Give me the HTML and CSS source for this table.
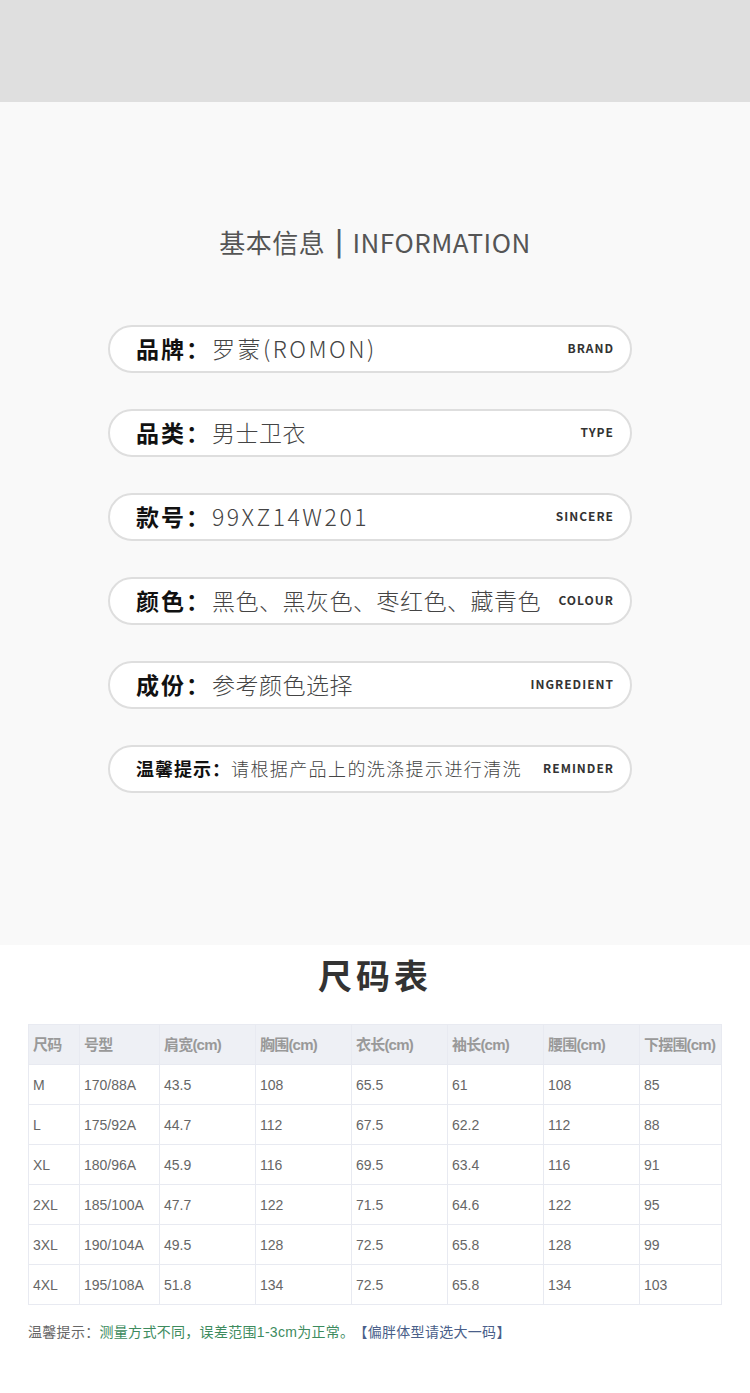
FILE: index.html
```html
<!DOCTYPE html>
<html lang="zh-CN">
<head>
    <meta charset="UTF-8">
    <meta name="viewport" content="width=device-width, initial-scale=1.0">
    <title>基本信息</title>
    <link rel="stylesheet" href="styles.css">
</head>
<body>
    <div class="top-band"></div>

    <section class="info">
        <h2 class="info-title">基本信息<span class="bar">|</span>INFORMATION</h2>

        <div class="pill">
            <span class="label">品牌：</span>
            <span class="value latin">罗蒙(ROMON)</span>
            <span class="en">BRAND</span>
        </div>
        <div class="pill">
            <span class="label">品类：</span>
            <span class="value">男士卫衣</span>
            <span class="en">TYPE</span>
        </div>
        <div class="pill">
            <span class="label">款号：</span>
            <span class="value latin">99XZ14W201</span>
            <span class="en">SINCERE</span>
        </div>
        <div class="pill">
            <span class="label">颜色：</span>
            <span class="value">黑色、黑灰色、枣红色、藏青色</span>
            <span class="en">COLOUR</span>
        </div>
        <div class="pill">
            <span class="label">成份：</span>
            <span class="value">参考颜色选择</span>
            <span class="en">INGREDIENT</span>
        </div>
        <div class="pill small">
            <span class="label">温馨提示：</span>
            <span class="value">请根据产品上的洗涤提示进行清洗</span>
            <span class="en">REMINDER</span>
        </div>
    </section>

    <section class="sizes">
        <h2 class="sizes-title">尺码表</h2>
        <table class="size-table">
            <thead>
                <tr>
                    <th class="c1">尺码</th>
                    <th class="c2">号型</th>
                    <th class="c3">肩宽(cm)</th>
                    <th class="c3">胸围(cm)</th>
                    <th class="c3">衣长(cm)</th>
                    <th class="c3">袖长(cm)</th>
                    <th class="c3">腰围(cm)</th>
                    <th>下摆围(cm)</th>
                </tr>
            </thead>
            <tbody>
                <tr><td>M</td><td>170/88A</td><td>43.5</td><td>108</td><td>65.5</td><td>61</td><td>108</td><td>85</td></tr>
                <tr><td>L</td><td>175/92A</td><td>44.7</td><td>112</td><td>67.5</td><td>62.2</td><td>112</td><td>88</td></tr>
                <tr><td>XL</td><td>180/96A</td><td>45.9</td><td>116</td><td>69.5</td><td>63.4</td><td>116</td><td>91</td></tr>
                <tr><td>2XL</td><td>185/100A</td><td>47.7</td><td>122</td><td>71.5</td><td>64.6</td><td>122</td><td>95</td></tr>
                <tr><td>3XL</td><td>190/104A</td><td>49.5</td><td>128</td><td>72.5</td><td>65.8</td><td>128</td><td>99</td></tr>
                <tr><td>4XL</td><td>195/108A</td><td>51.8</td><td>134</td><td>72.5</td><td>65.8</td><td>134</td><td>103</td></tr>
            </tbody>
        </table>
        <p class="note">温馨提示：<span class="green">测量方式不同，误差范围1-3cm为正常。</span><span class="blue">【偏胖体型请选大一码】</span></p>
    </section>
</body>
</html>
```

FILE: styles.css
```css
*{
    margin: 0;
    padding: 0;
    box-sizing: border-box;
}

body{
    width: 750px;
    background-color: #fff;
    font-family: "Noto Sans CJK SC", "Liberation Sans", sans-serif;
}

.top-band{
    height: 102px;
    background-color: #dfdfdf;
}

.info{
    height: 843px;
    background-color: #f9f9f9;
    display: flex;
    flex-direction: column;
    align-items: center;
    padding-top: 122px;
}

.info-title{
    font-size: 26px;
    line-height: 36px;
    font-weight: 400;
    color: #555;
    margin-bottom: 65px;
    letter-spacing: 0.5px;
}

.info-title .bar{
    font-weight: 700;
    margin: 0 9px 0 10px;
    position: relative;
    top: -2px;
}

.pill{
    width: 524px;
    height: 48px;
    border: 2px solid #dedede;
    border-radius: 24px;
    background-color: #fff;
    display: flex;
    align-items: center;
    padding: 0 16px 3px 26px;
    margin-bottom: 36px;
    margin-right: 10px;
}

.pill .label{
    font-size: 23px;
    font-weight: 700;
    color: #111;
    letter-spacing: 2px;
    white-space: nowrap;
    margin-right: 1px;
}

.pill .value{
    font-size: 23px;
    font-weight: 300;
    color: #444;
    letter-spacing: 0.5px;
    flex: 1;
    min-width: 0;
    white-space: nowrap;
}

.pill .value.latin{
    letter-spacing: 2.5px;
}

.pill .en{
    font-size: 12px;
    font-weight: 700;
    color: #333;
    letter-spacing: 1px;
    margin-left: 10px;
    white-space: nowrap;
}

.pill.small .label{
    font-size: 18px;
    letter-spacing: 1px;
    margin-right: 0;
}

.pill.small .value{
    font-size: 18px;
    letter-spacing: 1.4px;
}

.sizes{
    padding: 0 28px;
}

.sizes-title{
    height: 60px;
    line-height: 60px;
    text-align: center;
    font-size: 34px;
    font-weight: 700;
    color: #333;
    letter-spacing: 4px;
    margin-bottom: 19px;
}

.size-table{
    width: 694px;
    border-collapse: collapse;
    font-family: "Liberation Sans", "Noto Sans CJK SC", sans-serif;
    font-size: 14px;
    color: #666;
}

.size-table th,
.size-table td{
    height: 40px;
    border: 1px solid #e8eaf1;
    text-align: left;
    padding: 0 4px;
    white-space: nowrap;
}

.size-table th{
    background-color: #eef0f5;
    color: #999;
    font-size: 15px;
    font-weight: 700;
    letter-spacing: -0.8px;
    padding-bottom: 3px;
}

.size-table .c1{ width: 51px; }
.size-table .c2{ width: 80px; }
.size-table .c3{ width: 96px; }

.note{
    margin-top: 16px;
    font-family: "Liberation Sans", "Noto Sans CJK SC", sans-serif;
    font-size: 14px;
    letter-spacing: 0.3px;
    color: #666;
}

.note .green{
    color: #3d8b5e;
    margin-right: 6px;
}

.note .blue{
    color: #4a5f8a;
}
```
